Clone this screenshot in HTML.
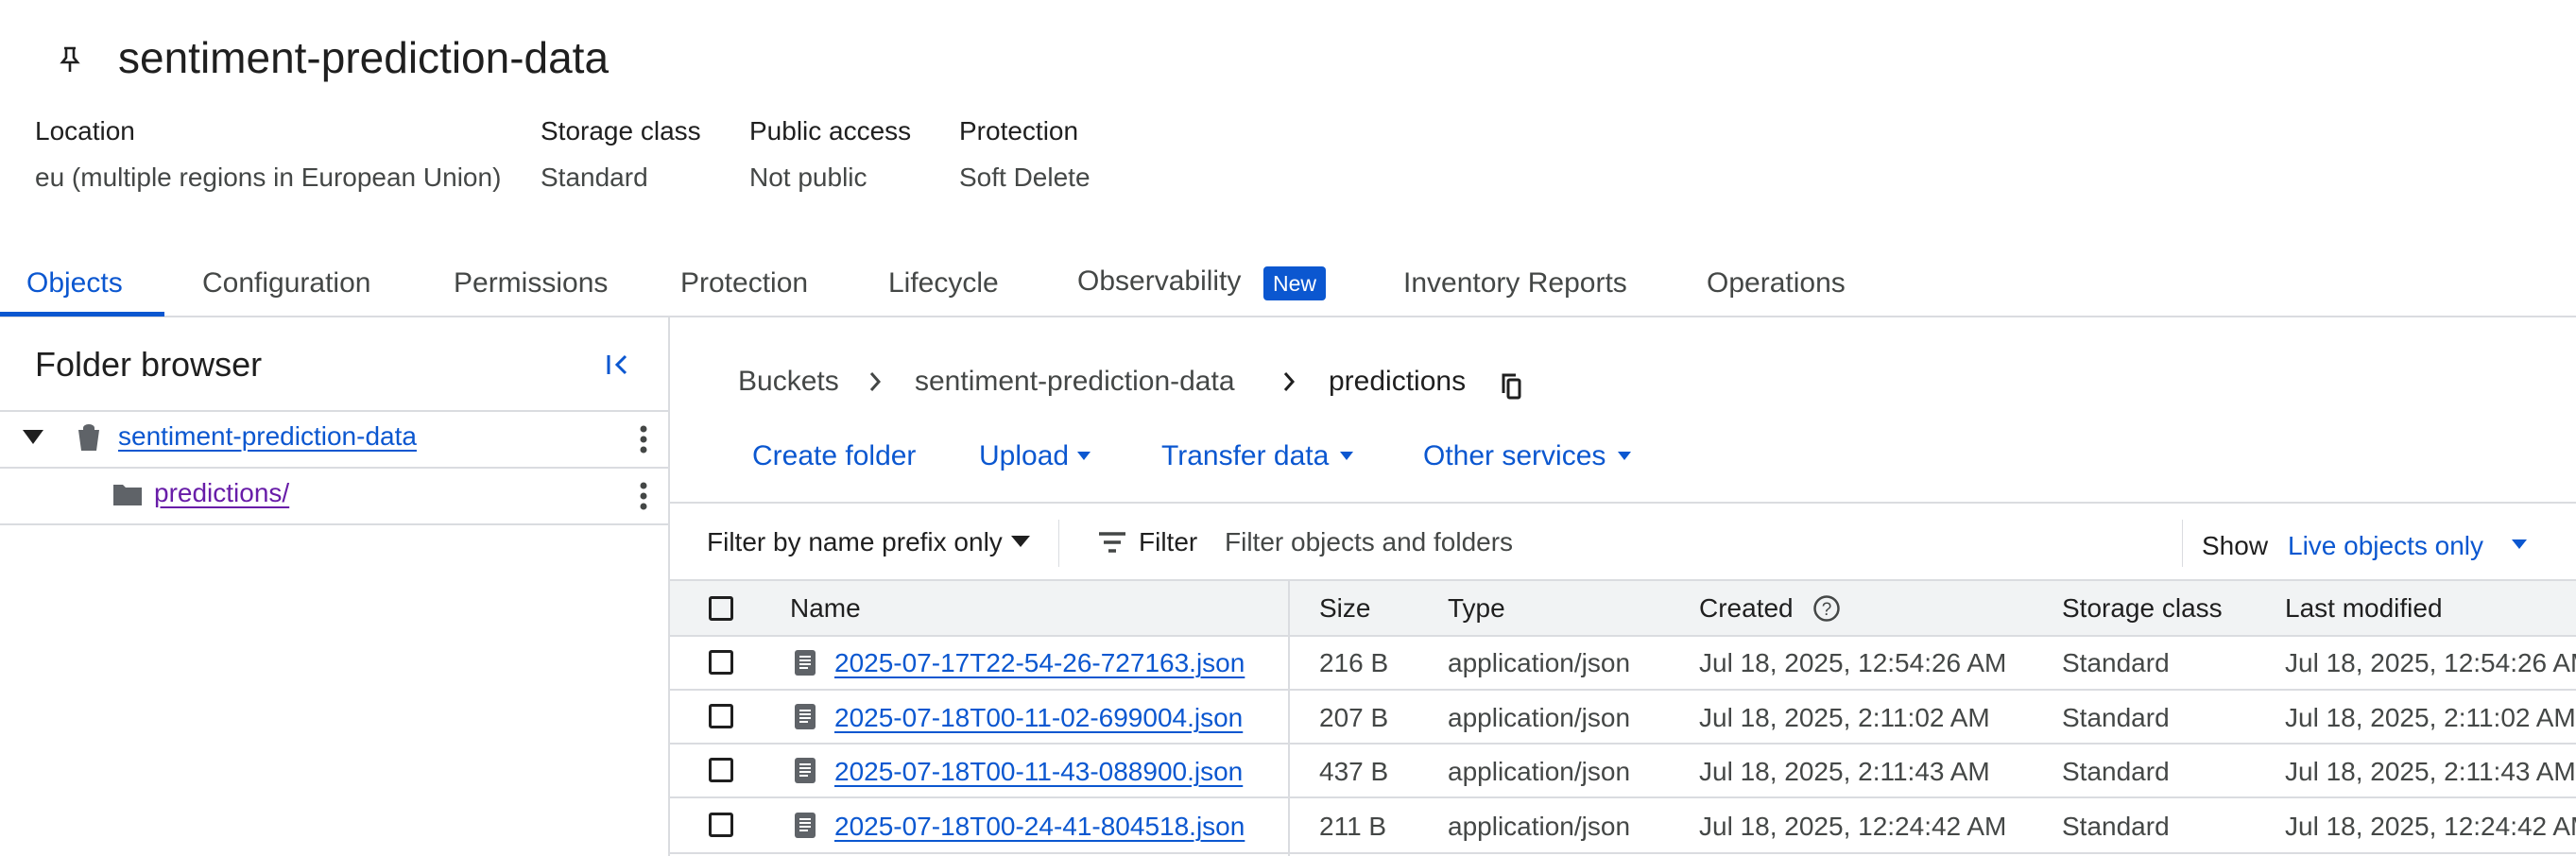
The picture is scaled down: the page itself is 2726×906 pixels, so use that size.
<!DOCTYPE html>
<html><head><meta charset="utf-8"><style>
*{margin:0;padding:0;box-sizing:border-box}
body{width:2726px;height:906px;overflow:hidden;background:#fff;font-family:"Liberation Sans",Arial,sans-serif;color:#1f1f1f;position:relative}
.a{position:absolute;white-space:nowrap}
.t{font-size:28px;line-height:32px;transform:translateY(-50%)}
.g{color:#444746}
.b{color:#0b57d0}
.hl{position:absolute;height:2px;background:#dadce0}
.vl{position:absolute;width:2px;background:#dadce0}
.u{text-decoration:underline;text-underline-offset:5px;text-decoration-thickness:2px}
.cb{position:absolute;width:26px;height:26px;border:3.5px solid #1f1f1f;border-radius:3px}
.tab{font-size:30px}
.bc{font-size:30px}
</style></head><body>

<svg class="a" style="left:62px;top:48px" width="24" height="30" viewBox="0 0 24 30"><path d="M6 3h12M8 3v10l-4 5h16l-4-5V3M12 18v10" fill="none" stroke="#1f1f1f" stroke-width="2.6"/></svg>
<div class="a" style="left:125px;top:61px;font-size:46px;transform:translateY(-50%)">sentiment-prediction-data</div>

<div class="a t" style="left:37px;top:139px">Location</div>
<div class="a t g" style="left:37px;top:188px">eu (multiple regions in European Union)</div>
<div class="a t" style="left:572px;top:139px">Storage class</div>
<div class="a t g" style="left:572px;top:188px">Standard</div>
<div class="a t" style="left:793px;top:139px">Public access</div>
<div class="a t g" style="left:793px;top:188px">Not public</div>
<div class="a t" style="left:1015px;top:139px">Protection</div>
<div class="a t g" style="left:1015px;top:188px">Soft Delete</div>

<div class="a t b tab" style="left:28px;top:300px">Objects</div>
<div class="a t g tab" style="left:214px;top:300px">Configuration</div>
<div class="a t g tab" style="left:480px;top:300px">Permissions</div>
<div class="a t g tab" style="left:720px;top:300px">Protection</div>
<div class="a t g tab" style="left:940px;top:300px">Lifecycle</div>
<div class="a t g tab" style="left:1140px;top:298px">Observability</div>
<div class="a" style="left:1337px;top:282px;width:66px;height:36px;background:#0b57d0;color:#fff;border-radius:4px;font-size:23px;line-height:36px;text-align:center">New</div>
<div class="a t g tab" style="left:1485px;top:300px">Inventory Reports</div>
<div class="a t g tab" style="left:1806px;top:300px">Operations</div>
<div class="hl" style="left:0;top:334px;width:2726px"></div>
<div class="a" style="left:0;top:330px;width:174px;height:5px;background:#0b57d0"></div>

<div class="vl" style="left:707px;top:336px;height:570px"></div>
<div class="a" style="left:37px;top:386px;font-size:36px;transform:translateY(-50%)">Folder browser</div>
<svg class="a" style="left:640px;top:372px" width="28" height="28" viewBox="0 0 28 28"><path d="M4 4v20M22 5l-9 9 9 9" fill="none" stroke="#0b57d0" stroke-width="3"/></svg>
<div class="hl" style="left:0;top:434px;width:707px"></div>
<div class="hl" style="left:0;top:494px;width:707px"></div>
<div class="hl" style="left:0;top:554px;width:707px"></div>
<svg class="a" style="left:24px;top:455px" width="22" height="16"><path d="M0 0h22L11 15z" fill="#1f1f1f"/></svg>
<svg class="a" style="left:80px;top:448px" width="28" height="30" viewBox="0 0 28 30"><path d="M8 5a6 4 0 0 1 12 0v2h5l-3 22H6L3 7h5z" fill="#5f6368"/></svg>
<div class="a t b u" style="left:125px;top:462px">sentiment-prediction-data</div>
<svg class="a" style="left:676px;top:450px" width="10" height="30"><circle cx="5" cy="4" r="3.5" fill="#444746"/><circle cx="5" cy="15" r="3.5" fill="#444746"/><circle cx="5" cy="26" r="3.5" fill="#444746"/></svg>
<svg class="a" style="left:119px;top:510px" width="32" height="26" viewBox="0 0 32 26"><path d="M1 3h10l3 3h17v19H1z" fill="#5f6368"/></svg>
<div class="a t u" style="left:163px;top:522px;color:#681da8">predictions/</div>
<svg class="a" style="left:676px;top:510px" width="10" height="30"><circle cx="5" cy="4" r="3.5" fill="#444746"/><circle cx="5" cy="15" r="3.5" fill="#444746"/><circle cx="5" cy="26" r="3.5" fill="#444746"/></svg>

<div class="a t g bc" style="left:781px;top:404px">Buckets</div>
<svg class="a" style="left:918px;top:392px" width="16" height="24"><path d="M4 3l8 9-8 9" fill="none" stroke="#444746" stroke-width="3"/></svg>
<div class="a t g bc" style="left:968px;top:404px">sentiment-prediction-data</div>
<svg class="a" style="left:1356px;top:392px" width="16" height="24"><path d="M4 3l8 9-8 9" fill="none" stroke="#1f1f1f" stroke-width="3"/></svg>
<div class="a t bc" style="left:1406px;top:404px">predictions</div>
<svg class="a" style="left:1588px;top:394px" width="26" height="30" viewBox="0 0 26 30"><path d="M3 22V3h13" fill="none" stroke="#1f1f1f" stroke-width="3"/><rect x="8" y="8" width="12" height="19" rx="1.5" fill="none" stroke="#1f1f1f" stroke-width="3"/></svg>

<div class="a t b bc" style="left:796px;top:483px">Create folder</div>
<div class="a t b bc" style="left:1036px;top:483px">Upload</div>
<svg class="a" style="left:1140px;top:478px" width="14" height="9"><path d="M0 0h14L7 9z" fill="#0b57d0"/></svg>
<div class="a t b bc" style="left:1229px;top:483px">Transfer data</div>
<svg class="a" style="left:1418px;top:478px" width="14" height="9"><path d="M0 0h14L7 9z" fill="#0b57d0"/></svg>
<div class="a t b bc" style="left:1506px;top:483px">Other services</div>
<svg class="a" style="left:1712px;top:478px" width="14" height="9"><path d="M0 0h14L7 9z" fill="#0b57d0"/></svg>
<div class="hl" style="left:709px;top:531px;width:2017px"></div>

<div class="a t" style="left:748px;top:574px">Filter by name prefix only</div>
<svg class="a" style="left:1070px;top:567px" width="20" height="12"><path d="M0 0h20L10 12z" fill="#1f1f1f"/></svg>
<div class="vl" style="left:1120px;top:550px;height:50px;width:1px"></div>
<svg class="a" style="left:1163px;top:562px" width="28" height="24"><path d="M0 3h28M5 12h18M10 21h8" stroke="#444746" stroke-width="3.5"/></svg>
<div class="a t" style="left:1205px;top:574px">Filter</div>
<div class="a t g" style="left:1296px;top:574px">Filter objects and folders</div>
<div class="vl" style="left:2309px;top:550px;height:50px;width:1px"></div>
<div class="a t" style="left:2330px;top:578px">Show</div>
<div class="a t b" style="left:2421px;top:578px">Live objects only</div>
<svg class="a" style="left:2658px;top:571px" width="16" height="10"><path d="M0 0h16L8 10z" fill="#0b57d0"/></svg>

<div class="a" style="left:709px;top:614px;width:2017px;height:59px;background:#f1f3f4"></div>
<div class="hl" style="left:709px;top:613px;width:2017px"></div>
<div class="hl" style="left:709px;top:672px;width:2017px"></div>
<div class="vl" style="left:1363px;top:614px;height:292px"></div>
<div class="cb" style="left:750px;top:631px"></div>
<div class="a t" style="left:836px;top:644px">Name</div>
<div class="a t" style="left:1396px;top:644px">Size</div>
<div class="a t" style="left:1532px;top:644px">Type</div>
<div class="a t" style="left:1798px;top:644px">Created</div>
<svg class="a" style="left:1918px;top:629px" width="30" height="30"><circle cx="15" cy="15" r="12.5" fill="none" stroke="#444746" stroke-width="2.5"/><text x="15" y="22" font-size="19" text-anchor="middle" fill="#444746" font-family="Liberation Sans">?</text></svg>
<div class="a t" style="left:2182px;top:644px">Storage class</div>
<div class="a t" style="left:2418px;top:644px">Last modified</div>

<div class="hl" style="left:709px;top:729px;width:2017px"></div>
<div class="hl" style="left:709px;top:786px;width:2017px"></div>
<div class="hl" style="left:709px;top:843px;width:2017px"></div>
<div class="hl" style="left:709px;top:902px;width:2017px"></div>

<div class="cb" style="left:750px;top:688px"></div>
<div class="cb" style="left:750px;top:745px"></div>
<div class="cb" style="left:750px;top:802px"></div>
<div class="cb" style="left:750px;top:860px"></div>

<svg class="a" style="left:841px;top:688px" width="22" height="27"><rect width="22" height="27" rx="3" fill="#5f6368"/><path d="M5 7h12M5 11h12M5 15h12M5 19h9" stroke="#fff" stroke-width="2"/></svg>
<svg class="a" style="left:841px;top:745px" width="22" height="27"><rect width="22" height="27" rx="3" fill="#5f6368"/><path d="M5 7h12M5 11h12M5 15h12M5 19h9" stroke="#fff" stroke-width="2"/></svg>
<svg class="a" style="left:841px;top:802px" width="22" height="27"><rect width="22" height="27" rx="3" fill="#5f6368"/><path d="M5 7h12M5 11h12M5 15h12M5 19h9" stroke="#fff" stroke-width="2"/></svg>
<svg class="a" style="left:841px;top:860px" width="22" height="27"><rect width="22" height="27" rx="3" fill="#5f6368"/><path d="M5 7h12M5 11h12M5 15h12M5 19h9" stroke="#fff" stroke-width="2"/></svg>

<div class="a t b u" style="left:883px;top:702px">2025-07-17T22-54-26-727163.json</div>
<div class="a t b u" style="left:883px;top:760px">2025-07-18T00-11-02-699004.json</div>
<div class="a t b u" style="left:883px;top:817px">2025-07-18T00-11-43-088900.json</div>
<div class="a t b u" style="left:883px;top:875px">2025-07-18T00-24-41-804518.json</div>

<div class="a t g" style="left:1396px;top:702px">216 B</div>
<div class="a t g" style="left:1396px;top:760px">207 B</div>
<div class="a t g" style="left:1396px;top:817px">437 B</div>
<div class="a t g" style="left:1396px;top:875px">211 B</div>

<div class="a t g" style="left:1532px;top:702px">application/json</div>
<div class="a t g" style="left:1532px;top:760px">application/json</div>
<div class="a t g" style="left:1532px;top:817px">application/json</div>
<div class="a t g" style="left:1532px;top:875px">application/json</div>

<div class="a t g" style="left:1798px;top:702px">Jul 18, 2025, 12:54:26 AM</div>
<div class="a t g" style="left:1798px;top:760px">Jul 18, 2025, 2:11:02 AM</div>
<div class="a t g" style="left:1798px;top:817px">Jul 18, 2025, 2:11:43 AM</div>
<div class="a t g" style="left:1798px;top:875px">Jul 18, 2025, 12:24:42 AM</div>

<div class="a t g" style="left:2182px;top:702px">Standard</div>
<div class="a t g" style="left:2182px;top:760px">Standard</div>
<div class="a t g" style="left:2182px;top:817px">Standard</div>
<div class="a t g" style="left:2182px;top:875px">Standard</div>

<div class="a t g" style="left:2418px;top:702px">Jul 18, 2025, 12:54:26 AM</div>
<div class="a t g" style="left:2418px;top:760px">Jul 18, 2025, 2:11:02 AM</div>
<div class="a t g" style="left:2418px;top:817px">Jul 18, 2025, 2:11:43 AM</div>
<div class="a t g" style="left:2418px;top:875px">Jul 18, 2025, 12:24:42 AM</div>
</body></html>
